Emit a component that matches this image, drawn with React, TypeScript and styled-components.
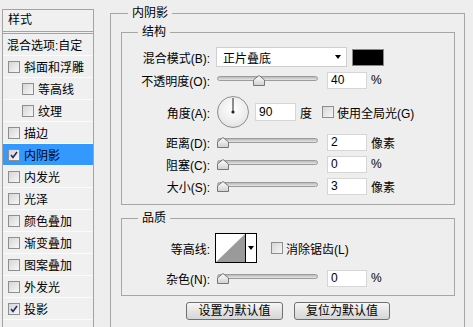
import styled, { createGlobalStyle } from "styled-components"

const GlobalStyle = createGlobalStyle`
html, body { margin:0; padding:0; }
body {
  background:#eeeeee;
  font-family:"Liberation Sans","Noto Sans CJK SC",sans-serif;
  font-size:12px;
  color:#000;
}
`

const Dialog = styled.div`
display:flex;
width:473px;
height:327px;
overflow:hidden;
background:#eeeeee;
`

/* left style list */
const StylePanel = styled.div`
flex-shrink:0;
margin:9px 0 0 2px;
width:90px;
height:340px;
border:1px solid #a3a3a3;
background:#f0f0f0;
`
const PanelHeader = styled.div`
height:21px;
line-height:21px;
padding-left:5px;
border-bottom:1px solid #a3a3a3;
margin-bottom:1px;
`
const List = styled.div`
border-top:1px solid #a3a3a3;
`
const ListRow = styled.div<{ $indent: number; $active?: boolean }>`
display:flex;
align-items:center;
gap:4px;
height:21px;
padding-left:${p => p.$indent}px;
border-bottom:1px solid #fbfbfb;
background:${p => (p.$active ? "#3399ff" : "transparent")};
white-space:nowrap;
`

const Box = styled.span<{ $checked?: boolean }>`
display:inline-flex;
align-items:center;
justify-content:center;
flex-shrink:0;
width:12px;
height:12px;
box-sizing:border-box;
border:1px solid #8e8e8e;
background:linear-gradient(135deg,#d6d6d6,#f7f7f7);
`

const Check = ({ checked }: { checked?: boolean }) => (
  <Box $checked={checked}>
    {checked && (
      <svg width="8" height="8" viewBox="0 0 8 8">
        <path d="M1 4 L3 6.5 L7 1" fill="none" stroke="#1f2f66" strokeWidth="1.6" />
      </svg>
    )}
  </Box>
)

/* right side */
const RightColumn = styled.div`
margin:6px 0 0 16px;
`
const OuterGroup = styled.fieldset`
box-sizing:border-box;
width:355px;
height:340px;
margin:0;
min-width:0;
padding:5px 9px 0 10px;
border:1px solid #a6a6a6;
`
const InnerGroup = styled.fieldset<{ $top?: number; $pad: string }>`
margin:${p => p.$top ?? 0}px 0 0 0;
min-width:0;
padding:${p => p.$pad};
border:1px solid #a6a6a6;
`
const Legend = styled.legend<{ $offset: number }>`
margin-left:${p => p.$offset}px;
padding:0 4px;
line-height:14px;
font-size:12px;
`
const Row = styled.div<{ $h: number }>`
display:flex;
align-items:center;
height:${p => p.$h}px;
white-space:nowrap;
`
const Label = styled.span`
flex-shrink:0;
width:88px;
margin-right:6px;
text-align:right;
`
const Select = styled.div`
display:flex;
align-items:center;
justify-content:space-between;
box-sizing:border-box;
width:131px;
height:20px;
padding:0 5px 0 6px;
margin-right:5px;
background:#fff;
border:1px solid #cfcfcf;
`
const Arrow = styled.span`
width:0;
height:0;
border-left:3.5px solid transparent;
border-right:3.5px solid transparent;
border-top:4px solid #000;
`
const Swatch = styled.span`
box-sizing:border-box;
width:32px;
height:17px;
background:#000;
border:1px solid #8a8a8a;
`
const SliderWrap = styled.div`
position:relative;
flex-shrink:0;
width:101px;
height:12px;
margin:0 9px 0 1px;
`
const Track = styled.div`
position:absolute;
left:0;
right:0;
top:2px;
height:5px;
box-sizing:border-box;
border:1px solid #9c9c9c;
border-radius:3px;
background:linear-gradient(#b9b9b9,#e6e6e6);
`
const Thumb = styled.svg`
position:absolute;
top:1px;
`
const NumBox = styled.div<{ $w?: number; $h?: number }>`
box-sizing:border-box;
flex-shrink:0;
width:${p => p.$w ?? 40}px;
height:${p => p.$h ?? 17}px;
line-height:${p => (p.$h ?? 17) - 2}px;
padding-left:3px;
margin-right:4px;
background:#fff;
border:1px solid #d6d6d6;
`
const Dial = styled.div`
flex-shrink:0;
width:32px;
height:32px;
box-sizing:border-box;
margin:0 6px 0 1px;
border-radius:50%;
border:1px solid #8f8f8f;
background:radial-gradient(circle at 50% 40%,#ffffff,#ececec 60%,#d4d4d4);
`
const Unit = styled.span<{ $gap?: number }>`
margin-right:${p => p.$gap ?? 0}px;
`
const CheckLabel = styled.span`
margin-left:3px;
`
const Contour = styled.div`
display:flex;
flex-shrink:0;
box-sizing:border-box;
width:42px;
height:30px;
margin-left:-1px;
margin-right:14px;
border:1px solid #000;
background:#fff;
`
const ContourCurve = styled.div`
width:29px;
border-right:1px solid #000;
`
const ContourArrow = styled.div`
flex:1;
display:flex;
align-items:center;
justify-content:center;
`
const ButtonRow = styled.div`
display:flex;
justify-content:center;
gap:11px;
margin-top:6px;
`
const Button = styled.button<{ $w: number }>`
width:${p => p.$w}px;
height:18px;
padding:0;
font-family:"Liberation Sans","Noto Sans CJK SC",sans-serif;
font-size:12px;
line-height:16px;
color:#000;
border:1px solid #707070;
border-radius:3px;
background:linear-gradient(#f7f7f7,#e4e4e4 50%,#d6d6d6);
`

const Slider = ({ value }: { value: number }) => (
  <SliderWrap>
    <Track />
    <Thumb width="12" height="11" viewBox="0 0 12 11" style={{ left: value * 89 }}>
      <defs>
        <linearGradient id="tg" x1="0" y1="0" x2="0" y2="1">
          <stop offset="0" stopColor="#ffffff" />
          <stop offset="1" stopColor="#cfcfcf" />
        </linearGradient>
      </defs>
      <path d="M6 0.5 L11.5 5 L11.5 10.5 L0.5 10.5 L0.5 5 Z" fill="url(#tg)" stroke="#777" />
    </Thumb>
  </SliderWrap>
)

const styles = [
  { name: "斜面和浮雕", indent: 5 },
  { name: "等高线", indent: 19 },
  { name: "纹理", indent: 19 },
  { name: "描边", indent: 5 },
  { name: "内阴影", indent: 5, checked: true, active: true },
  { name: "内发光", indent: 5 },
  { name: "光泽", indent: 5 },
  { name: "颜色叠加", indent: 5 },
  { name: "渐变叠加", indent: 5 },
  { name: "图案叠加", indent: 5 },
  { name: "外发光", indent: 5 },
  { name: "投影", indent: 5, checked: true },
]

const App = () => {
  return (
    <Dialog>
      <GlobalStyle />
      <StylePanel>
        <PanelHeader>样式</PanelHeader>
        <List>
          <ListRow $indent={4}>混合选项:自定</ListRow>
          {styles.map(s => (
            <ListRow key={s.name} $indent={s.indent} $active={s.active}>
              <Check checked={s.checked} />
              {s.name}
            </ListRow>
          ))}
          <ListRow $indent={5} />
        </List>
      </StylePanel>

      <RightColumn>
        <OuterGroup>
          <Legend $offset={7}>内阴影</Legend>
          <InnerGroup $pad="8px 0 7px 0">
            <Legend $offset={16}>结构</Legend>
            <Row $h={20}>
              <Label>混合模式(B):</Label>
              <Select>
                正片叠底
                <Arrow />
              </Select>
              <Swatch />
            </Row>
            <Row $h={26}>
              <Label>不透明度(O):</Label>
              <Slider value={0.4} />
              <NumBox>40</NumBox>
              <Unit>%</Unit>
            </Row>
            <Row $h={38}>
              <Label>角度(A):</Label>
              <Dial>
                <svg width="30" height="30" viewBox="0 0 30 30">
                  <line x1="15" y1="15" x2="15" y2="1" stroke="#222" strokeWidth="1" />
                  <circle cx="15" cy="15" r="1.6" fill="#222" />
                </svg>
              </Dial>
              <NumBox $w={41} $h={18}>90</NumBox>
              <Unit $gap={10}>度</Unit>
              <Check />
              <CheckLabel>使用全局光(G)</CheckLabel>
            </Row>
            <Row $h={22}>
              <Label>距离(D):</Label>
              <Slider value={0} />
              <NumBox>2</NumBox>
              <Unit>像素</Unit>
            </Row>
            <Row $h={22}>
              <Label>阻塞(C):</Label>
              <Slider value={0} />
              <NumBox>0</NumBox>
              <Unit>%</Unit>
            </Row>
            <Row $h={22}>
              <Label>大小(S):</Label>
              <Slider value={0} />
              <NumBox>3</NumBox>
              <Unit>像素</Unit>
            </Row>
          </InnerGroup>

          <InnerGroup $top={6} $pad="8px 0 2px 0">
            <Legend $offset={16}>品质</Legend>
            <Row $h={30}>
              <Label>等高线:</Label>
              <Contour>
                <ContourCurve>
                  <svg width="29" height="28" viewBox="0 0 29 28">
                    <path d="M0 28 L29 0 L29 28 Z" fill="#9a9a9a" />
                  </svg>
                </ContourCurve>
                <ContourArrow>
                  <Arrow />
                </ContourArrow>
              </Contour>
              <Check />
              <CheckLabel>消除锯齿(L)</CheckLabel>
            </Row>
            <Row $h={30}>
              <Label>杂色(N):</Label>
              <Slider value={0} />
              <NumBox>0</NumBox>
              <Unit>%</Unit>
            </Row>
          </InnerGroup>

          <ButtonRow>
            <Button $w={97}>设置为默认值</Button>
            <Button $w={96}>复位为默认值</Button>
          </ButtonRow>
        </OuterGroup>
      </RightColumn>
    </Dialog>
  )
}

export default App
